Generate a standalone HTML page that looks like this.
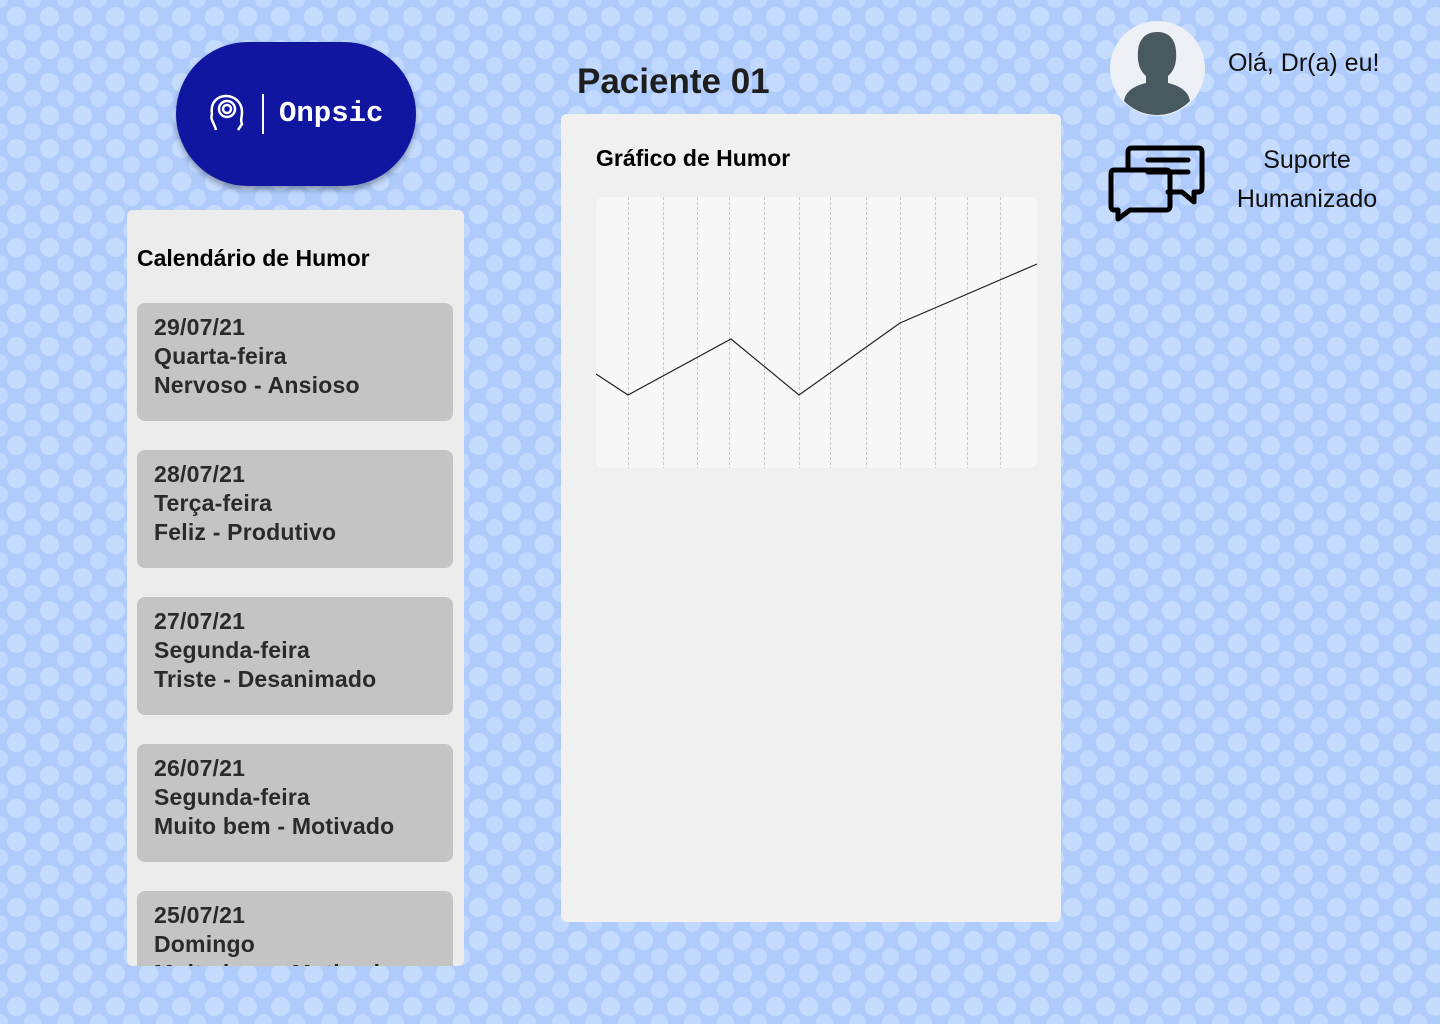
<!DOCTYPE html>
<html><head><meta charset="utf-8"><style>
*{margin:0;padding:0;box-sizing:border-box}
body{width:1440px;height:1024px;overflow:hidden;position:relative;font-family:"Liberation Sans",sans-serif;
background-color:#aecbfc;
background-image:radial-gradient(circle at 50% 50%,#c6dcff 0 9px,transparent 10px),radial-gradient(circle at 50% 50%,#c2d9ff 0 8px,transparent 9px);
background-size:33px 33px,33px 33px;background-position:0 0,16px 16px;}
.logo{position:absolute;left:176px;top:42px;width:240px;height:144px;border-radius:72px;background:#1116a0;box-shadow:0 4px 6px rgba(0,0,0,.3)}
.logo .t{position:absolute;left:103px;top:55px;color:#fff;font-family:"Liberation Mono",monospace;font-size:29px;font-weight:bold}
.logo .bar{position:absolute;left:86px;top:52px;width:2px;height:40px;background:#fff}
.left{position:absolute;left:127px;top:210px;width:337px;height:756px;background:#ececec;border-radius:6px;overflow:hidden}
.left h2{position:absolute;left:10px;top:35px;font-size:23px;font-weight:bold;color:#000}
.card{position:absolute;left:10px;width:316px;height:118px;background:#c4c4c4;border-radius:8px;padding:10px 0 0 17px;color:#2a2a2a;font-size:23px;font-weight:bold;line-height:29px;letter-spacing:0.2px}
.mid{position:absolute;left:561px;top:114px;width:500px;height:808px;background:#f0f0f0;border-radius:6px}
h1{position:absolute;left:577px;top:62px;font-size:35px;font-weight:bold;color:#1e1e1e}
.mid h3{position:absolute;left:35px;top:31px;font-size:23px;font-weight:bold;color:#000}
.right{position:absolute;font-size:25px;color:#111;text-align:center}
</style></head><body>
<div class="logo">
<svg style="position:absolute;left:32px;top:50px" width="40" height="42" viewBox="0 0 40 42" fill="none" stroke="#fff" stroke-width="2.5"><path d="M8 38 C6 30 2 28 4 22 C2 10 10 4 18 4 C26 4 34 10 34 20 C34 26 32 28 34 32 L30 38"/><circle cx="19" cy="17" r="8"/><circle cx="19" cy="17" r="4"/></svg>
<div class="bar"></div><div class="t">Onpsic</div></div>
<h1>Paciente 01</h1>
<div class="left"><h2>Calendário de Humor</h2>
<div class="card" style="top:93px">29/07/21<br>Quarta-feira<br>Nervoso - Ansioso</div>
<div class="card" style="top:240px">28/07/21<br>Terça-feira<br>Feliz - Produtivo</div>
<div class="card" style="top:387px">27/07/21<br>Segunda-feira<br>Triste - Desanimado</div>
<div class="card" style="top:534px">26/07/21<br>Segunda-feira<br>Muito bem - Motivado</div>
<div class="card" style="top:681px">25/07/21<br>Domingo<br>Muito bem - Motivado</div>
</div>
<div class="mid"><h3>Gráfico de Humor</h3></div>
<svg style="position:absolute;left:596px;top:197px" width="441" height="271" viewBox="596 197 441 271">
<rect x="596" y="197" width="441" height="271" rx="8" fill="#f7f7f7"/>
<g stroke="#c8c8c8" stroke-dasharray="3 2" stroke-width="1">
<path d="M628.5 197V468M663.5 197V468M697.5 197V468M729.5 197V468M764.5 197V468M799.5 197V468M830.5 197V468M866.5 197V468M900.5 197V468M935.5 197V468M967.5 197V468M1000.5 197V468"/></g>
<polyline points="596,374 628,395 731,339 799,395 900,323 1037,264" fill="none" stroke="#222" stroke-width="1.2"/>
</svg>
<svg style="position:absolute;left:1110px;top:21px" width="95" height="95" viewBox="0 0 95 95"><circle cx="47.5" cy="47.5" r="47.5" fill="#edf0f4"/><path d="M14 80 C16 68 28 64 36 62 L36 55 C30 50 27 42 28 30 C29 16 38 11 47 11 C57 11 65 16 66 30 C67 42 64 50 58 55 L58 62 C66 64 78 68 80 80 C70 90 58 94 47 94 C36 94 24 90 14 80Z" fill="#48595f"/></svg>
<div class="right" style="left:1228px;top:49px">Olá, Dr(a) eu!</div>
<svg style="position:absolute;left:1108px;top:144px" width="100" height="78" viewBox="0 0 100 78" fill="none" stroke="#000" stroke-width="5" stroke-linejoin="round" stroke-linecap="round">
<path d="M20 26 V8 Q20 4 24 4 H90 Q94 4 94 8 V44 Q94 48 90 48 H86 V58 L74 48 H60"/>
<path d="M40 16 H80 M40 28 H80"/>
<path d="M6 26 H58 Q62 26 62 30 V62 Q62 66 58 66 H22 L10 75 V66 H6 Q3 66 3 62 V30 Q3 26 6 26 Z"/>
</svg>
<div class="right" style="left:1222px;top:141px;line-height:39px;width:170px">Suporte<br>Humanizado</div>
</body></html>
